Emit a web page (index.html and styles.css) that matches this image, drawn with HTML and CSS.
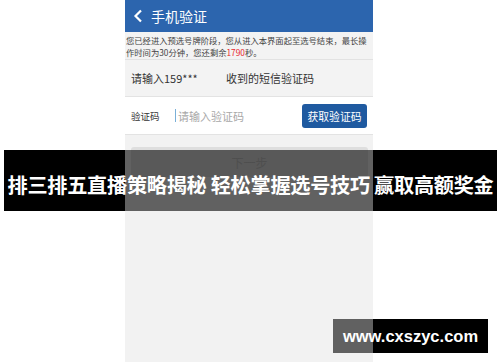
FILE: index.html
```html
<!DOCTYPE html>
<html lang="zh-CN">
<head>
<meta charset="utf-8">
<title>手机验证</title>
<link rel="stylesheet" href="styles.css">
</head>
<body>
<div class="stage">
  <div class="phone">
    <div class="header">
      <svg class="back" width="10" height="14" viewBox="0 0 10 14"><path d="M8 1.5 L2.5 7 L8 12.5" fill="none" stroke="#fff" stroke-width="2.2"/></svg>
      <span class="title">手机验证</span>
    </div>
    <div class="notice">您已经进入预选号牌阶段，您从进入本界面起至选号结束，最长操作时间为30分钟，您还剩余<span class="red">1790</span>秒。</div>
    <div class="row row-info">
      <span class="phone-no">请输入159***</span>
      <span class="hint">收到的短信验证码</span>
    </div>
    <div class="row row-code">
      <span class="label">验证码</span>
      <span class="input"><span class="caret"></span>请输入验证码</span>
      <span class="get-btn">获取验证码</span>
    </div>
    <div class="next-wrap">
      <div class="next-btn">下一步</div>
    </div>
  </div>
  <div class="banner">排三排五直播策略揭秘 轻松掌握选号技巧 赢取高额奖金</div>
  <div class="site">www.cxszyc.com</div>
</div>
</body>
</html>
```
FILE: styles.css
```css
html, body {
  margin: 0;
  padding: 0;
  background: #fff;
}
body {
  font-family: "Noto Sans CJK SC", "Noto Sans", sans-serif;
}
.stage {
  position: relative;
  width: 500px;
  height: 362px;
  overflow: hidden;
  display: flex;
  padding-left: 125px;
  box-sizing: border-box;
}
.phone {
  width: 248px;
  height: 362px;
  background: #f2f2f2;
  display: flex;
  flex-direction: column;
}
.header {
  height: 32px;
  background: #2c65ae;
  display: flex;
  align-items: center;
  padding-left: 8px;
  gap: 8px;
  color: #fff;
}
.back { display: block; }
.title {
  font-size: 14px;
  line-height: 14px;
}
.notice {
  height: 28px;
  padding: 3px 0 0 1px;
  box-sizing: border-box;
  font-size: 8.3px;
  line-height: 11.5px;
  color: #444;
  background: #f3f3f3;
  border-bottom: 1px solid #e2e2e2;
}
.red { color: #e8262c; }
.row {
  display: flex;
  align-items: center;
  box-sizing: border-box;
}
.row-info {
  height: 37px;
  background: #f3f3f3;
  padding-left: 6px;
  font-size: 11px;
  color: #333;
  border-bottom: 1px solid #e3e3e3;
}
.phone-no { width: 95px; }
.row-code {
  height: 38px;
  background: #fff;
  padding: 0 6px;
  border-bottom: 1px solid #e3e3e3;
}
.label {
  font-size: 9.5px;
  color: #333;
  width: 44px;
}
.input {
  flex: 1;
  font-size: 11px;
  color: #a8a8a8;
  display: flex;
  align-items: center;
  gap: 2px;
}
.caret {
  width: 1px;
  height: 13px;
  background: #7ab0d8;
}
.get-btn {
  width: 65px;
  height: 24px;
  background: #1f5aa0;
  border-radius: 3px;
  color: #fff;
  font-size: 10.8px;
  display: flex;
  align-items: center;
  justify-content: center;
}
.next-wrap {
  flex: 1;
  padding: 12px 5px 0 6px;
}
.next-btn {
  height: 30px;
  background: #dedede;
  border-radius: 3px;
  color: #c4c4c4;
  font-size: 12px;
  display: flex;
  align-items: center;
  justify-content: center;
}
.banner {
  position: absolute;
  left: 4px;
  top: 150px;
  width: 493px;
  height: 61px;
  background: linear-gradient(to right, #000 0, #000 121px, rgba(0,0,0,0.6) 121px, rgba(0,0,0,0.6) 369px, #000 369px);
  color: #fff;
  font-weight: bold;
  font-size: 20.2px;
  line-height: 61px;
  padding-top: 4px;
  box-sizing: border-box;
  white-space: nowrap;
  text-align: center;
  letter-spacing: -0.3px;
}
.site {
  position: absolute;
  left: 333px;
  top: 319px;
  width: 155px;
  height: 34px;
  background: linear-gradient(to right, rgba(0,0,0,0.6) 0, rgba(0,0,0,0.6) 40px, #000 40px);
  color: #fff;
  font-family: "Liberation Sans", Arial, sans-serif;
  font-weight: bold;
  font-size: 16.5px;
  line-height: 34px;
  text-align: center;
}
```
